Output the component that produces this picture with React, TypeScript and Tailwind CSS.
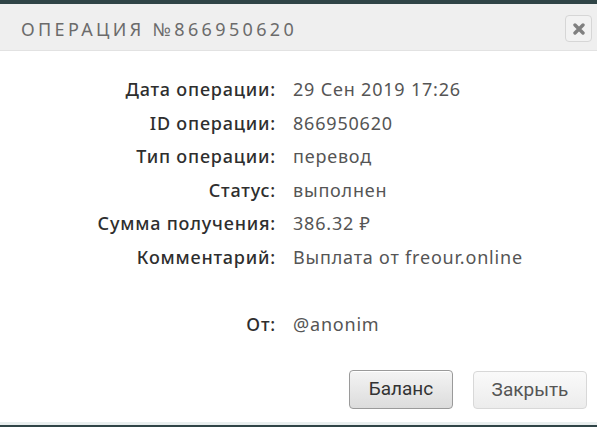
import React from 'react';

const rows = [
  { label: 'Дата операции:', value: '29 Сен 2019 17:26' },
  { label: 'ID операции:', value: '866950620' },
  { label: 'Тип операции:', value: 'перевод' },
  { label: 'Статус:', value: 'выполнен' },
  { label: 'Сумма получения:', value: '386.32 ₽' },
  { label: 'Комментарий:', value: 'Выплата от freour.online' },
];

export default function App() {
  return (
    <div className="w-[597px] h-[427px] flex flex-col bg-[#2f4446] overflow-hidden" style={{ fontFamily: '"Noto Sans", sans-serif' }}>
      <div className="h-[4px]" />
      <div className="flex-1 flex flex-col bg-white">
        {/* header */}
        <div className="h-[47px] flex items-center justify-between bg-[#efefef] border-b border-[#e2e2e2] pl-[21px] pr-[5px]">
          <h2 className="text-[18px] tracking-[3.35px] text-[#6b6b6b] uppercase mt-[4px]">Операция №866950620</h2>
          <button className="w-[27px] h-[27px] mt-[3px] flex items-center justify-center rounded-[4px] border border-[#d6d6d6] bg-[#f2f2f2]">
            <svg width="12" height="12" viewBox="0 0 12 12">
              <path d="M2 2 L10 10 M10 2 L2 10" stroke="#808080" strokeWidth="3.4" strokeLinecap="round" />
            </svg>
          </button>
        </div>

        {/* details */}
        <div className="flex flex-col pt-[22px]">
          {rows.map((r) => (
            <div key={r.label} className="flex items-center h-[33.5px] text-[18px] tracking-[0.8px]">
              <div className="w-[276px] text-right font-medium text-[#2e2e2e]">{r.label}</div>
              <div className="pl-[17px] text-[#555]">{r.value}</div>
            </div>
          ))}
          <div className="flex items-center h-[33px] mt-[34px] text-[18px] tracking-[0.8px]">
            <div className="w-[276px] text-right font-medium text-[#2e2e2e]">От:</div>
            <div className="pl-[17px] text-[#555]">@anonim</div>
          </div>
        </div>

        {/* footer buttons */}
        <div className="flex-1 flex items-end justify-end gap-[20px] pr-[10px] pb-[13px]" style={{ fontFamily: 'Roboto, sans-serif' }}>
          <button className="w-[104px] h-[39px] rounded-[4px] border border-[#9a9a9a] bg-gradient-to-b from-[#f4f4f4] to-[#dcdcdc] text-[19px] text-[#333] shadow-[inset_0_1px_0_#fff]">Баланс</button>
          <button className="w-[114px] h-[38px] rounded-[4px] border border-[#d8d8d8] bg-gradient-to-b from-[#fafafa] to-[#ececec] text-[19px] text-[#555]">Закрыть</button>
        </div>
        <div className="h-[3px] bg-[#e8eeee]" />
      </div>
      <div className="h-[2px]" />
    </div>
  );
}
